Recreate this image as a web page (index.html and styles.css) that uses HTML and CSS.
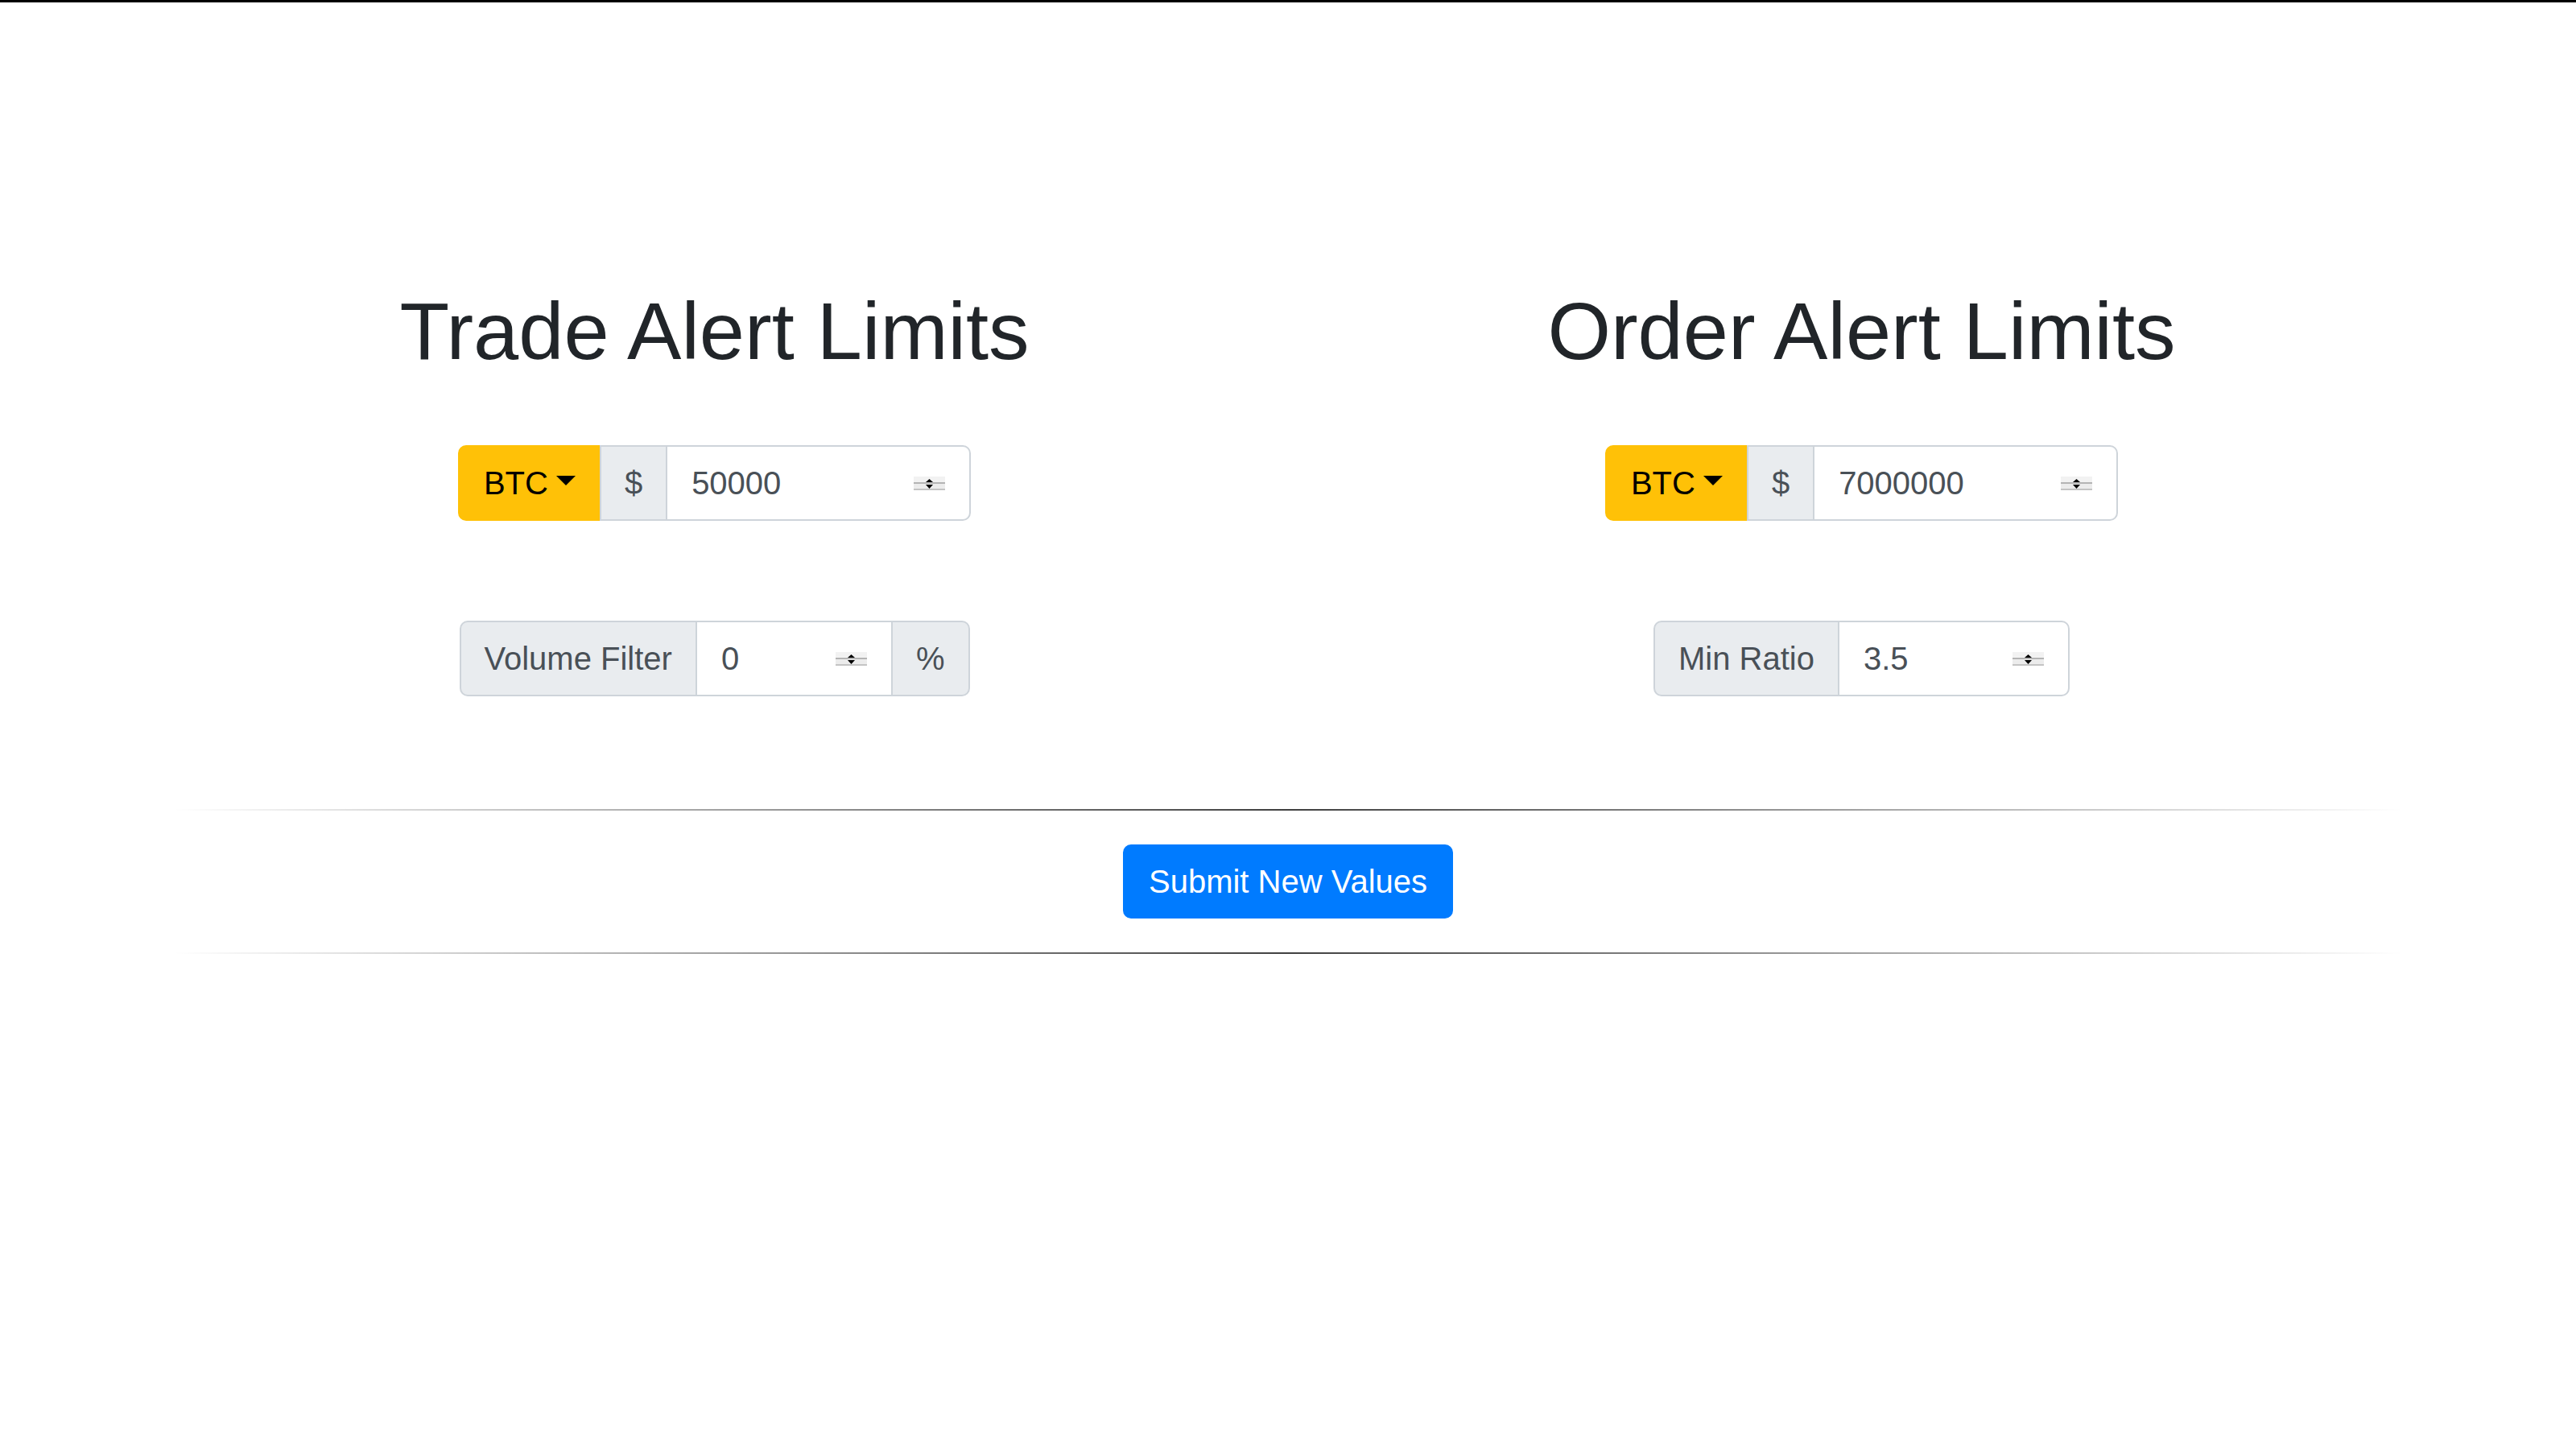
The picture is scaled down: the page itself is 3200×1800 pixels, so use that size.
FILE: index.html
```html
<!DOCTYPE html>
<html lang="en">
<head>
<meta charset="utf-8">
<title>Alert Limits</title>
<link rel="stylesheet" href="styles.css">
</head>
<body>
<div class="topbar"></div>
<main class="page">
  <div class="columns">
    <section class="col">
      <h1 class="title">Trade Alert Limits</h1>
      <div class="group">
        <button class="btc" type="button">BTC<span class="caret"></span></button>
        <span class="addon">$</span>
        <div class="field w-price">
          <input type="text" value="50000">
          <svg class="spin" viewBox="0 0 39 17" width="39" height="17"><rect x="0" y="0" width="39" height="17" fill="#ececec"/><rect x="0" y="0" width="39" height="8" fill="#f2f2f2"/><rect x="0" y="7" width="39" height="2" fill="#b4b4b4"/><rect x="0" y="15" width="39" height="2" fill="#c4c4c4"/><polygon points="15,7 24,7 19.5,3" fill="#000"/><polygon points="15,10 24,10 19.5,15" fill="#000"/></svg>
        </div>
      </div>
      <div class="group">
        <span class="addon">Volume Filter</span>
        <div class="field w-vol">
          <input type="text" value="0">
          <svg class="spin" viewBox="0 0 39 17" width="39" height="17"><rect x="0" y="0" width="39" height="17" fill="#ececec"/><rect x="0" y="0" width="39" height="8" fill="#f2f2f2"/><rect x="0" y="7" width="39" height="2" fill="#b4b4b4"/><rect x="0" y="15" width="39" height="2" fill="#c4c4c4"/><polygon points="15,7 24,7 19.5,3" fill="#000"/><polygon points="15,10 24,10 19.5,15" fill="#000"/></svg>
        </div>
        <span class="addon">%</span>
      </div>
    </section>
    <section class="col">
      <h1 class="title">Order Alert Limits</h1>
      <div class="group">
        <button class="btc" type="button">BTC<span class="caret"></span></button>
        <span class="addon">$</span>
        <div class="field w-price">
          <input type="text" value="7000000">
          <svg class="spin" viewBox="0 0 39 17" width="39" height="17"><rect x="0" y="0" width="39" height="17" fill="#ececec"/><rect x="0" y="0" width="39" height="8" fill="#f2f2f2"/><rect x="0" y="7" width="39" height="2" fill="#b4b4b4"/><rect x="0" y="15" width="39" height="2" fill="#c4c4c4"/><polygon points="15,7 24,7 19.5,3" fill="#000"/><polygon points="15,10 24,10 19.5,15" fill="#000"/></svg>
        </div>
      </div>
      <div class="group">
        <span class="addon">Min Ratio</span>
        <div class="field w-ratio">
          <input type="text" value="3.5">
          <svg class="spin" viewBox="0 0 39 17" width="39" height="17"><rect x="0" y="0" width="39" height="17" fill="#ececec"/><rect x="0" y="0" width="39" height="8" fill="#f2f2f2"/><rect x="0" y="7" width="39" height="2" fill="#b4b4b4"/><rect x="0" y="15" width="39" height="2" fill="#c4c4c4"/><polygon points="15,7 24,7 19.5,3" fill="#000"/><polygon points="15,10 24,10 19.5,15" fill="#000"/></svg>
        </div>
      </div>
    </section>
  </div>
  <hr class="rule rule-top">
  <div class="actions">
    <button class="submit" type="button">Submit New Values</button>
  </div>
  <hr class="rule">
</main>
</body>
</html>
```

FILE: styles.css
```css
* {
  box-sizing: border-box;
}

html,
body {
  margin: 0;
  background: #fff;
}

body {
  font-family: "Liberation Sans", Arial, Helvetica, sans-serif;
  color: #212529;
}

.topbar {
  height: 3px;
  background: #000;
}

.page {
  width: 2850px;
  margin: 0 auto;
  padding-top: 348px;
}

.columns {
  display: grid;
  grid-template-columns: 1fr 1fr;
}

.col {
  display: flex;
  flex-direction: column;
  align-items: center;
}

.title {
  margin: 0 0 82px;
  font-size: 101px;
  line-height: 120px;
  font-weight: 400;
  color: #212529;
}

.group {
  display: flex;
  height: 94px;
  font-size: 40px;
  line-height: 60px;
}

.group + .group {
  margin-top: 124px;
}

.btc {
  display: flex;
  align-items: center;
  margin: 0;
  padding: 0 30px;
  font: inherit;
  color: #000;
  background: #ffc107;
  border: 2px solid #ffc107;
  border-radius: 10px 0 0 10px;
  cursor: pointer;
}

.caret {
  width: 0;
  height: 0;
  margin-left: 10px;
  margin-bottom: 6px;
  border-top: 12px solid #000;
  border-left: 12px solid transparent;
  border-right: 12px solid transparent;
}

.addon {
  display: flex;
  align-items: center;
  margin-left: -2px;
  padding: 0 29px;
  color: #495057;
  background: #e9ecef;
  border: 2px solid #ced4da;
  white-space: nowrap;
}

.group > :first-child {
  margin-left: 0;
  border-radius: 10px 0 0 10px;
}

.group > :last-child {
  border-radius: 0 10px 10px 0;
}

.field {
  display: flex;
  align-items: center;
  margin-left: -2px;
  padding: 0 30px;
  background: #fff;
  border: 2px solid #ced4da;
}

.w-price {
  width: 379px;
}

.w-vol {
  width: 245px;
}

.w-ratio {
  width: 288px;
}

.field input {
  flex: 1;
  min-width: 0;
  margin: 0;
  padding: 0;
  font: inherit;
  color: #495057;
  background: transparent;
  border: 0;
  outline: 0;
}

.spin {
  flex: none;
  display: block;
  width: 39px;
  height: 17px;
}

.rule {
  height: 2px;
  margin: 0 40px;
  border: 0;
  background: linear-gradient(to right, rgba(0, 0, 0, 0), rgba(0, 0, 0, 0.75), rgba(0, 0, 0, 0));
}

.rule-top {
  margin-top: 140px;
}

.actions {
  display: flex;
  justify-content: center;
  padding: 42px 0;
}

.submit {
  margin: 0;
  padding: 14px 30px;
  font: inherit;
  font-size: 40px;
  line-height: 60px;
  color: #fff;
  background: #007bff;
  border: 2px solid #007bff;
  border-radius: 10px;
  cursor: pointer;
}
```
